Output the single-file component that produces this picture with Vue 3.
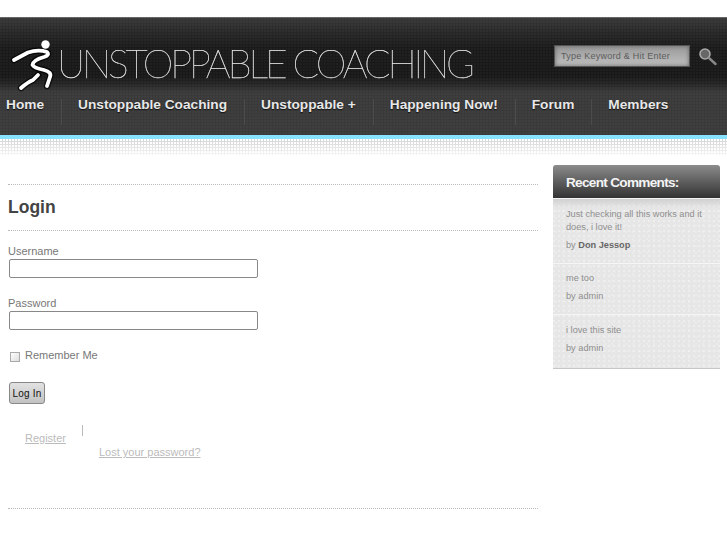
<script setup>
const navItems = ['Home', 'Unstoppable Coaching', 'Unstoppable +', 'Happening Now!', 'Forum', 'Members']

const comments = [
  { text: 'Just checking all this works and it does, i love it!', author: 'Don Jessop', strong: true },
  { text: 'me too', author: 'admin' },
  { text: 'i love this site', author: 'admin' }
]
</script>

<template>
  <div class="page">
    <header class="header">
      <div class="brand-row">
        <svg class="runner" width="50" height="54" viewBox="10 38 50 54" fill="none" stroke-linecap="round" stroke-linejoin="round">
          <g stroke="#000" stroke-width="6.5" opacity="0.7">
            <path d="M14 60 L28 52.5 Q38 49 47 52 Q50 55 44 57 Q33 60 32.5 65 Q34 68 44 70 Q52 72 50 77 L47 86" />
            <path d="M38 75 L33 80 Q28 82 21 88" />
          </g>
          <circle cx="45.5" cy="44.5" r="4.2" fill="#fff" />
          <g stroke="#fff" stroke-width="3.8">
            <path d="M14 60 L28 52.5 Q38 49 47 52 Q50 55 44 57 Q33 60 32.5 65 Q34 68 44 70 Q52 72 50 77 L47 86" />
            <path d="M38 75 L33 80 Q28 82 21 88" />
          </g>
        </svg>
        <div class="brand-name">UNSTOPPABLE COACHING</div>
        <div class="search">
          <input class="search-input" type="text" placeholder="Type Keyword &amp; Hit Enter" />
          <svg class="search-icon" width="19" height="19" viewBox="0 0 19 19" fill="none">
            <circle cx="7" cy="7" r="5" fill="#666" stroke="#aaa" stroke-width="1.6" />
            <path d="M11 11 L17.5 17" stroke="#888" stroke-width="2.4" stroke-linecap="round" />
          </svg>
        </div>
      </div>
      <nav class="nav">
        <a v-for="item in navItems" :key="item" class="nav-item">{{ item }}</a>
      </nav>
    </header>
    <div class="header-fade"></div>

    <div class="content">
      <main class="main">
        <h1 class="title">Login</h1>
        <form class="login-form" @submit.prevent>
          <label class="field-label">Username</label>
          <input class="field" type="text" />
          <label class="field-label second">Password</label>
          <input class="field" type="password" />
          <label class="remember">
            <span class="check"></span>
            Remember Me
          </label>
          <button class="submit" type="submit">Log In</button>
        </form>
        <div class="links">
          <a class="link register">Register</a>
          <span class="pipe"></span>
          <a class="link lost">Lost your password?</a>
        </div>
      </main>

      <aside class="sidebar">
        <h3 class="widget-title">Recent Comments:</h3>
        <div class="widget-strip"></div>
        <div class="comments">
          <div v-for="c in comments" :key="c.text" class="comment">
            <p class="comment-text">{{ c.text }}</p>
            <p class="comment-by">by <b v-if="c.strong">{{ c.author }}</b><template v-else>{{ c.author }}</template></p>
          </div>
        </div>
      </aside>
    </div>
  </div>
</template>

<style>
html, body {
  margin: 0;
  background: #fff;
}
</style>

<style scoped>
.page {
  width: 727px;
  height: 545px;
  overflow: hidden;
  padding-top: 17px;
  box-sizing: border-box;
  font-family: "Liberation Sans", Arial, sans-serif;
  color: #777;
}

.header {
  height: 122px;
  box-sizing: border-box;
  border-top: 1px solid #666;
  border-bottom: 4px solid #86e2ff;
  background:
    radial-gradient(circle at 1px 1px, rgba(255, 255, 255, 0.03) 0.7px, transparent 1px) 0 0 / 3px 3px,
    linear-gradient(to bottom, #383838 0, #272727 14px, #1a1a1a 30px, #181818 58px, #252525 66px, #393939 74px, #3a3a3a 117px);
}

.brand-row {
  height: 70px;
  display: flex;
  align-items: flex-start;
  position: relative;
}

.runner {
  margin: 20px 0 0 10px;
  flex: none;
}

.brand-name {
  margin: 22px 0 0 -3px;
  font-family: Lato, sans-serif;
  font-weight: 100;
  font-size: 39px;
  line-height: 46px;
  color: #f4f4f4;
  white-space: nowrap;
  letter-spacing: -3.1px;
  -webkit-text-stroke: 0.25px #eee;
  will-change: transform;
}

.search {
  position: absolute;
  left: 554px;
  top: 27px;
  display: flex;
  align-items: center;
}

.search-input {
  width: 136px;
  height: 22px;
  box-sizing: border-box;
  padding: 2px 6px;
  border: 1px solid #555;
  background: linear-gradient(to bottom, #999, #c0c0c0);
  box-shadow: inset 0 0 4px #666;
  font: 9px "Liberation Sans", Arial, sans-serif;
  letter-spacing: 0.25px;
  outline: none;
}

.search-input::placeholder {
  color: #5c5c5c;
  opacity: 1;
}

.search-icon {
  margin-left: 8px;
}

.nav {
  display: flex;
  height: 47px;
  align-items: flex-start;
}

.nav-item {
  display: block;
  height: 26px;
  margin-top: 11px;
  padding: 0 17px 0 16px;
  border-left: 1px solid #4c4c4c;
  font-size: 13.7px;
  font-weight: bold;
  line-height: 12px;
  color: #e8e8e8;
  text-shadow: 0 1px 1px #111;
  white-space: nowrap;
}

.nav-item:first-child {
  padding-left: 6px;
  border-left: 0;
}

.header-fade {
  height: 16px;
  background:
    radial-gradient(circle at 1px 1px, #fff 0.8px, transparent 1px) 0 0 / 3px 3px,
    linear-gradient(to bottom, #d4d4d4, #f6f6f6);
}

.content {
  display: flex;
  align-items: flex-start;
  padding: 10px 7px 0 8px;
}

.main {
  width: 530px;
  height: 323px;
  margin-top: 19px;
  border-top: 1px dotted #bbb;
  border-bottom: 1px dotted #bbb;
}

.title {
  margin: 0;
  height: 46px;
  box-sizing: border-box;
  border-bottom: 1px dotted #bbb;
  padding-top: 12px;
  font-size: 17.5px;
  line-height: 21px;
  font-weight: bold;
  color: #444;
}

.login-form {
  display: flex;
  flex-direction: column;
  align-items: flex-start;
}

.field-label {
  margin-top: 14px;
  font-size: 11px;
  line-height: 13px;
  color: #777;
}

.field-label.second {
  margin-top: 19px;
}

.field {
  width: 249px;
  height: 19px;
  box-sizing: border-box;
  margin: 1px 0 0 1px;
  border: 1px solid #888;
  border-radius: 2px;
  background: #fff;
  outline: none;
}

.remember {
  display: flex;
  align-items: center;
  margin-top: 19px;
  font-size: 11px;
  line-height: 13px;
  color: #777;
}

.check {
  width: 8px;
  height: 8px;
  margin: 2px 5px 0 2px;
  border: 1px solid #aaa;
  background: linear-gradient(135deg, #fff, #ddd);
}

.submit {
  width: 36px;
  height: 22px;
  margin: 20px 0 0 1px;
  padding: 0;
  border: 1px solid #888;
  border-radius: 3px;
  background: linear-gradient(to bottom, #e2e2e2, #c2c2c2);
  font: 10px "Liberation Sans", Arial, sans-serif;
  letter-spacing: 0.2px;
  color: #111;
}

.links {
  position: relative;
  height: 50px;
  margin-top: 21px;
  font-size: 11px;
  line-height: 13px;
}

.link {
  color: #bbb;
  text-decoration: underline;
  position: absolute;
}

.register {
  left: 17px;
  top: 7px;
}

.pipe {
  position: absolute;
  left: 74px;
  top: 0;
  width: 1px;
  height: 11px;
  background: #bbb;
}

.lost {
  left: 91px;
  top: 21px;
}

.sidebar {
  width: 167px;
  height: 204px;
  margin-left: 15px;
  box-sizing: border-box;
  border-bottom: 1px solid #c6c6c6;
  border-radius: 3px 3px 0 0;
  background:
    radial-gradient(circle at 1px 1px, #fff 0.5px, transparent 0.8px) 0 0 / 5px 5px,
    radial-gradient(circle at 1px 1px, #f6f6f6 0.5px, transparent 0.8px) 2px 3px / 7px 7px,
    #e6e6e6;
}

.widget-title {
  margin: 0;
  height: 34px;
  padding: 9px 0 0 13px;
  box-sizing: border-box;
  border-radius: 3px 3px 0 0;
  border-bottom: 1px solid #f4f4f4;
  background: linear-gradient(to bottom, #8c8c8c, #5a5a5a 55%, #333);
  font-size: 13.6px;
  line-height: 17px;
  letter-spacing: -0.7px;
  color: #f4f4f4;
}

.widget-strip {
  height: 9px;
  background: linear-gradient(to bottom, #d0d0d0, rgba(230, 230, 230, 0));
}

.comment {
  padding: 8px 14px 11px 13px;
  border-bottom: 1px solid #f6f6f6;
}

.comment:first-child {
  padding-top: 0;
}

.comment:last-child {
  padding-top: 9px;
  border-bottom: 0;
}

.comment-text,
.comment-by {
  margin: 0;
  font-size: 9.2px;
  line-height: 13px;
  color: #8f8f8f;
}

.comment-by {
  margin-top: 5px;
}

.comment-by b {
  color: #666;
}
</style>
